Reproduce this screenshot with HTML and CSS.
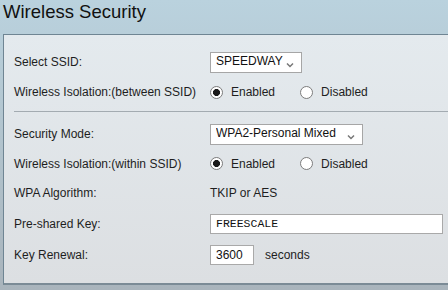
FILE: index.html
```html
<!DOCTYPE html>
<html lang="en">
<head>
    <meta charset="UTF-8">
    <title>Wireless Security</title>
    <link rel="stylesheet" href="styles.css">
</head>
<body>

<h1 class="page-title">Wireless Security</h1>

<div class="panel">
    <div class="row row-select">
        <label class="label" for="ssid">Select SSID:</label>
        <span class="select-wrap">
            <select id="ssid" class="select select-ssid">
                <option>SPEEDWAY</option>
            </select>
            <svg class="chevron" width="8" height="6" viewBox="0 0 8 6"><path d="M1 1.5 L4 4.5 L7 1.5" fill="none" stroke="#777" stroke-width="1.5"/></svg>
        </span>
    </div>
    <div class="row">
        <span class="label">Wireless Isolation:(between SSID)</span>
        <span class="radios">
            <label class="radio-opt"><input type="radio" name="iso-between" checked> Enabled</label>
            <label class="radio-opt"><input type="radio" name="iso-between"> Disabled</label>
        </span>
    </div>

    <div class="divider"></div>

    <div class="row row-select">
        <label class="label" for="mode">Security Mode:</label>
        <span class="select-wrap">
            <select id="mode" class="select select-mode">
                <option>WPA2-Personal Mixed</option>
            </select>
            <svg class="chevron" width="8" height="6" viewBox="0 0 8 6"><path d="M1 1.5 L4 4.5 L7 1.5" fill="none" stroke="#777" stroke-width="1.5"/></svg>
        </span>
    </div>
    <div class="row row-short">
        <span class="label">Wireless Isolation:(within SSID)</span>
        <span class="radios">
            <label class="radio-opt"><input type="radio" name="iso-within" checked> Enabled</label>
            <label class="radio-opt"><input type="radio" name="iso-within"> Disabled</label>
        </span>
    </div>
    <div class="row">
        <span class="label">WPA Algorithm:</span>
        <span class="value">TKIP or AES</span>
    </div>
    <div class="row row-input">
        <label class="label" for="psk">Pre-shared Key:</label>
        <input type="text" id="psk" class="text-input psk" value="FREESCALE">
    </div>
    <div class="row row-input">
        <label class="label" for="renewal">Key Renewal:</label>
        <span class="renewal">
            <input type="text" id="renewal" class="text-input renewal-input" value="3600">
            <span class="unit">seconds</span>
        </span>
    </div>
</div>

</body>
</html>
```

FILE: styles.css
```css
html, body {
    overflow: hidden;
}
body {
    margin: 0;
    height: 290px;
    font-family: "Liberation Sans", Arial, sans-serif;
    font-size: 12px;
    color: #1e1e1e;
    background: linear-gradient(#bad2de, #b3c6d0 40%, #a9b4bc);
}
.page-title {
    margin: 0;
    padding: 1px 0 0 3px;
    height: 34px;
    box-sizing: border-box;
    font-size: 18.5px;
    font-weight: normal;
    color: #111;
}
.panel {
    margin-left: 3px;
    height: 251px;
    box-sizing: border-box;
    border: 1px solid #6f8593;
    border-right: none;
    border-bottom: 2px solid #7b8b96;
    padding: 12px 0 0 10px;
    background: linear-gradient(#e4eaee, #dcdfe2);
}
.row {
    display: flex;
    align-items: center;
    height: 30px;
}
.row-short {
    height: 29px;
}
.row-input {
    height: 31px;
}
.label {
    width: 196px;
    flex: none;
}
.divider {
    height: 1px;
    background: #a3abb1;
    margin: 4px 0 7px;
}
.select-wrap {
    position: relative;
    display: inline-block;
}
.select {
    appearance: none;
    -webkit-appearance: none;
    height: 21px;
    margin: 0;
    padding: 0 0 2px 5px;
    border: 1px solid #a6a6a6;
    border-radius: 0;
    background: #fff;
    font-family: "Liberation Sans", Arial, sans-serif;
    font-size: 12px;
    color: #111;
}
.select-ssid {
    width: 92px;
}
.select-mode {
    width: 153px;
}
.chevron {
    position: absolute;
    right: 8px;
    top: 10px;
    pointer-events: none;
}
.radios {
    display: flex;
    align-items: center;
}
.radio-opt {
    display: flex;
    align-items: center;
    margin-right: 25px;
}
.radio-opt input {
    appearance: none;
    -webkit-appearance: none;
    width: 13px;
    height: 13px;
    margin: 0 8px 0 0;
    border: 1px solid #7c7c7c;
    border-radius: 50%;
    background: #fff;
    box-sizing: border-box;
}
.radio-opt input:checked {
    background: radial-gradient(circle, #1a1a1a 0, #1a1a1a 3.2px, #fff 3.8px);
}
.text-input {
    height: 20px;
    margin: 0;
    padding: 0 5px;
    box-sizing: border-box;
    border: 1px solid #a9a9a9;
    background: #fff;
    color: #111;
}
.psk {
    width: 233px;
    font-family: "Liberation Mono", "Courier New", monospace;
    font-size: 11.5px;
}
.renewal {
    display: flex;
    align-items: center;
}
.renewal-input {
    width: 44px;
    font-family: "Liberation Sans", Arial, sans-serif;
    font-size: 12px;
}
.unit {
    margin-left: 11px;
}
```
